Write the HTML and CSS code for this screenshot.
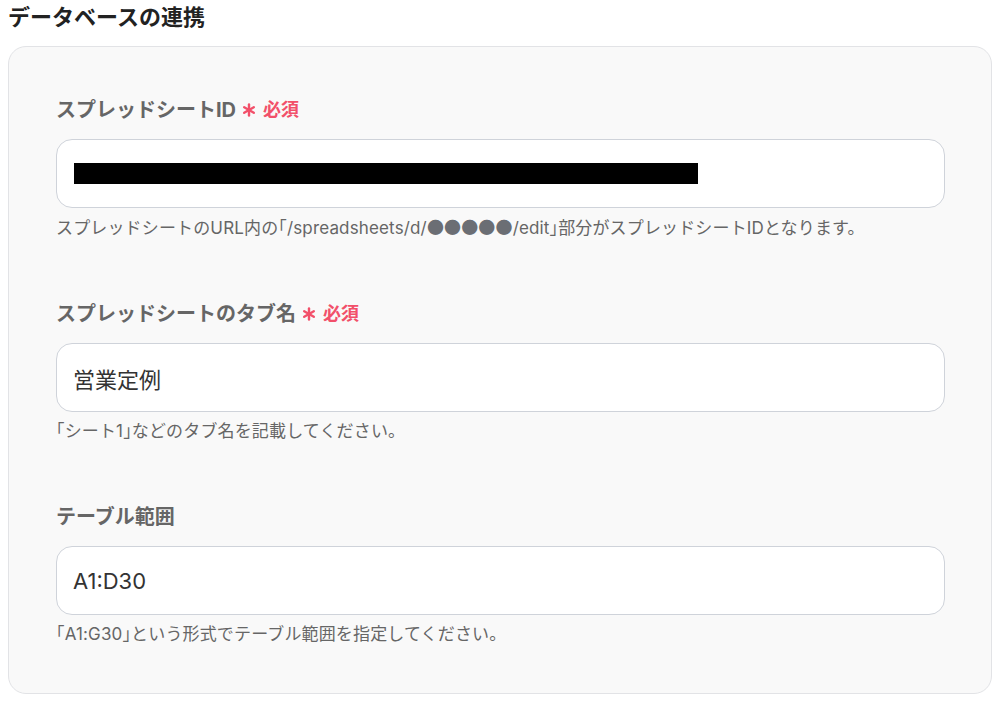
FILE: index.html
```html
<!DOCTYPE html>
<html lang="ja">
<head>
<meta charset="utf-8">
<title>データベースの連携</title>
<link rel="stylesheet" href="styles.css">
</head>
<body>
<h2 class="title">データベースの連携</h2>
<section class="card">
  <div class="field">
    <div class="label">スプレッドシートID<span class="req"><svg class="ast" viewBox="0 0 14 14" width="14" height="14"><g stroke="currentColor" stroke-width="2.4" stroke-linecap="round"><line x1="7" y1="1.5" x2="7" y2="12.5"/><line x1="2.2" y1="4.2" x2="11.8" y2="9.8"/><line x1="2.2" y1="9.8" x2="11.8" y2="4.2"/></g></svg>必須</span></div>
    <div class="input"><span class="redact"></span></div>
    <p class="hint">スプレッドシートのURL内の「/spreadsheets/d/<span class="dots">●●●●●</span>/edit」部分がスプレッドシートIDとなります。</p>
  </div>
  <div class="field">
    <div class="label">スプレッドシートのタブ名<span class="req"><svg class="ast" viewBox="0 0 14 14" width="14" height="14"><g stroke="currentColor" stroke-width="2.4" stroke-linecap="round"><line x1="7" y1="1.5" x2="7" y2="12.5"/><line x1="2.2" y1="4.2" x2="11.8" y2="9.8"/><line x1="2.2" y1="9.8" x2="11.8" y2="4.2"/></g></svg>必須</span></div>
    <div class="input">営業定例</div>
    <p class="hint">「シート1」などのタブ名を記載してください。</p>
  </div>
  <div class="field">
    <div class="label">テーブル範囲</div>
    <div class="input">A1:D30</div>
    <p class="hint">「A1:G30」という形式でテーブル範囲を指定してください。</p>
  </div>
</section>
</body>
</html>
```
FILE: styles.css
```css
html, body {
  margin: 0;
  padding: 0;
  background: #ffffff;
}
body {
  font-family: Inter, "Noto Sans CJK JP", sans-serif;
  color: #333;
}
.title {
  margin: 0;
  padding: 0 0 0 8px;
  height: 46px;
  line-height: 34px;
  font-size: 22px;
  font-weight: 700;
  color: #222;
}
.card {
  margin: 0 6px 0 8px;
  background: #f9f9f9;
  border: 1px solid #e2e3e6;
  border-radius: 18px;
  padding: 48px 46px 47px 47px;
  display: flex;
  flex-direction: column;
  gap: 59px;
}
.field {
  display: flex;
  flex-direction: column;
}
.label {
  display: flex;
  align-items: center;
  font-size: 20px;
  line-height: 30px;
  font-weight: 700;
  color: #666;
}
.req {
  display: inline-flex;
  align-items: center;
  margin-left: 6px;
  font-size: 18px;
  color: #f2506a;
}
.ast {
  margin-right: 7px;
}
.input {
  margin-top: 14px;
  height: 67px;
  box-sizing: content-box;
  border: 1px solid #cfd3da;
  border-radius: 16px;
  background: #fff;
  display: flex;
  align-items: center;
  padding: 0 16px;
  font-size: 22px;
  color: #333;
}
.redact {
  display: block;
  width: 624px;
  height: 21px;
  margin-left: 1px;
  background: #000;
}
.hint {
  margin: 7px 0 0;
  font-size: 17px;
  line-height: 24px;
  color: #666;
  font-feature-settings: "halt";
  white-space: nowrap;
  letter-spacing: 0.15px;
}
.dots {
  font-family: "Noto Sans CJK JP", sans-serif;
  color: #6b6e74;
}
```
